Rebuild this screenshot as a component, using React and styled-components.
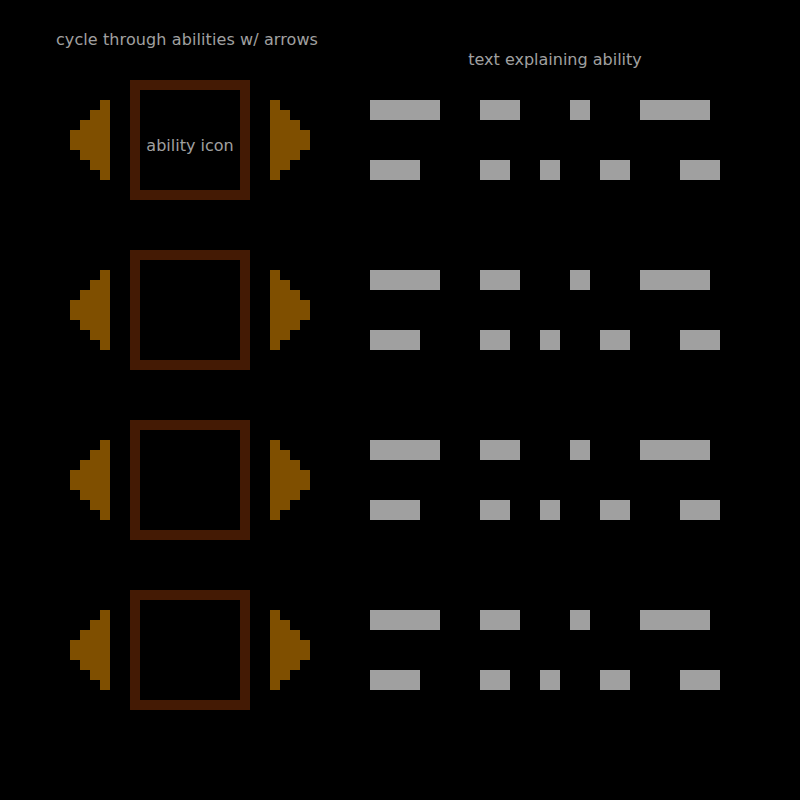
import React from "react";
import styled, { createGlobalStyle } from "styled-components";

const GlobalStyle = createGlobalStyle`
  html, body {
    margin: 0;
    padding: 0;
    background: #000;
  }
  body {
    font-family: "DejaVu Sans", sans-serif;
  }
`;

const Screen = styled.div`
  width: 800px;
  height: 800px;
  background: #000;
  color: #a0a0a0;
  font-size: 16px;
  position: relative;
  overflow: hidden;
`;

const Header = styled.div`
  display: flex;
  height: 80px;
`;

const HeaderLabel = styled.div`
  width: ${(p) => p.w}px;
  margin-left: ${(p) => p.ml || 0}px;
  padding-top: ${(p) => p.top}px;
  text-align: center;
  line-height: 20px;
  white-space: nowrap;
  letter-spacing: ${(p) => p.ls || 0}px;
`;

const List = styled.div`
  display: flex;
  flex-direction: column;
  gap: 50px;
  padding-left: 70px;
`;

const Row = styled.div`
  display: flex;
  height: 120px;
`;

const ArrowSvg = styled.svg`
  display: block;
  margin-top: 20px;
  flex-shrink: 0;
`;

const IconBox = styled.div`
  box-sizing: border-box;
  width: 120px;
  height: 120px;
  margin: 0 20px;
  padding-top: 10px;
  border: 10px solid #441a04;
  display: flex;
  align-items: center;
  justify-content: center;
  font-size: 16px;
  color: #a0a0a0;
`;

const Description = styled.div`
  display: flex;
  flex-direction: column;
  gap: 40px;
  padding-top: 20px;
  margin-left: 60px;
`;

const BarLine = styled.div`
  display: flex;
  height: 20px;
`;

const Bar = styled.span`
  display: block;
  width: ${(p) => p.w}px;
  height: 20px;
  margin-left: ${(p) => p.gap}px;
  background: #a0a0a0;
`;

const ARROW = "#7f4f00";

const LeftArrow = () => (
  <ArrowSvg width="40" height="80" viewBox="0 0 40 80">
    <polygon
      fill={ARROW}
      points="30,0 40,0 40,80 30,80 30,70 20,70 20,60 10,60 10,50 0,50 0,30 10,30 10,20 20,20 20,10 30,10"
    />
  </ArrowSvg>
);

const RightArrow = () => (
  <ArrowSvg width="40" height="80" viewBox="0 0 40 80">
    <polygon
      fill={ARROW}
      points="10,0 0,0 0,80 10,80 10,70 20,70 20,60 30,60 30,50 40,50 40,30 30,30 30,20 20,20 20,10 10,10"
    />
  </ArrowSvg>
);

// [gap before, width]
const lines = [
  [[0, 70], [40, 40], [50, 20], [50, 70]],
  [[0, 50], [60, 30], [30, 20], [40, 30], [50, 40]],
];

const abilities = ["ability icon", "", "", ""];

function App() {
  return (
    <Screen>
      <GlobalStyle />
      <Header>
        <HeaderLabel w={300} ml={37} top={30} ls={0.1}>
          cycle through abilities w/ arrows
        </HeaderLabel>
        <HeaderLabel w={300} ml={68} top={50}>
          text explaining ability
        </HeaderLabel>
      </Header>
      <List>
        {abilities.map((label, i) => (
          <Row key={i}>
            <LeftArrow />
            <IconBox>{label}</IconBox>
            <RightArrow />
            <Description>
              {lines.map((bars, j) => (
                <BarLine key={j}>
                  {bars.map(([gap, w], k) => (
                    <Bar key={k} gap={gap} w={w} />
                  ))}
                </BarLine>
              ))}
            </Description>
          </Row>
        ))}
      </List>
    </Screen>
  );
}

export default App;
